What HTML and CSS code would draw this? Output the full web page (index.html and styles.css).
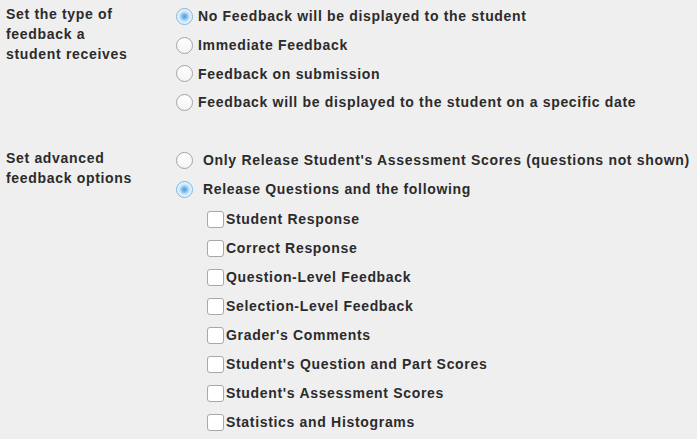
FILE: index.html
```html
<!DOCTYPE html>
<html>
<head>
<meta charset="utf-8">
<link rel="stylesheet" href="styles.css">
</head>
<body>
<div class="form">
  <div class="section">
    <div class="label">Set the type of feedback a student receives</div>
    <div class="options">
      <label class="row"><input type="radio" name="fb" class="radio" checked><span>No Feedback will be displayed to the student</span></label>
      <label class="row"><input type="radio" name="fb" class="radio"><span>Immediate Feedback</span></label>
      <label class="row"><input type="radio" name="fb" class="radio"><span>Feedback on submission</span></label>
      <label class="row"><input type="radio" name="fb" class="radio"><span>Feedback will be displayed to the student on a specific date</span></label>
    </div>
  </div>
  <div class="section second">
    <div class="label">Set advanced feedback options</div>
    <div class="options">
      <label class="row wide"><input type="radio" name="adv" class="radio"><span>Only Release Student's Assessment Scores (questions not shown)</span></label>
      <label class="row wide"><input type="radio" name="adv" class="radio" checked><span>Release Questions and the following</span></label>
      <div class="checks">
        <label class="row"><input type="checkbox" class="check"><span>Student Response</span></label>
        <label class="row"><input type="checkbox" class="check"><span>Correct Response</span></label>
        <label class="row"><input type="checkbox" class="check"><span>Question-Level Feedback</span></label>
        <label class="row"><input type="checkbox" class="check"><span>Selection-Level Feedback</span></label>
        <label class="row"><input type="checkbox" class="check"><span>Grader's Comments</span></label>
        <label class="row"><input type="checkbox" class="check"><span>Student's Question and Part Scores</span></label>
        <label class="row"><input type="checkbox" class="check"><span>Student's Assessment Scores</span></label>
        <label class="row"><input type="checkbox" class="check"><span>Statistics and Histograms</span></label>
      </div>
    </div>
  </div>
</div>
</body>
</html>
```
FILE: styles.css
```css
html, body {
  margin: 0;
  padding: 0;
  background: #efefef;
}
body {
  font-family: "Liberation Sans", Arial, sans-serif;
  font-size: 14px;
  font-weight: bold;
  letter-spacing: 0.68px;
  color: #2b2b2b;
}
.form {
  padding-top: 2px;
  padding-left: 6px;
}
.section {
  display: flex;
  align-items: flex-start;
}
.section.second {
  margin-top: 29px;
}
.label {
  width: 130px;
  flex: 0 0 130px;
  margin-right: 40px;
  line-height: 20px;
  padding-top: 2px;
}
.options {
  display: flex;
  flex-direction: column;
}
.section:first-child .row {
  height: 28.7px;
}
.row {
  display: flex;
  align-items: center;
  height: 29px;
  white-space: nowrap;
}
.radio {
  appearance: none;
  -webkit-appearance: none;
  margin: 0 5px 0 0;
  width: 17px;
  height: 17px;
  border-radius: 50%;
  border: 1px solid #a3a3a3;
  background: linear-gradient(#ffffff, #f4f4f4);
  box-sizing: border-box;
  flex: 0 0 auto;
}
.radio:checked {
  border-color: #7ab8e6;
  background: radial-gradient(circle at 50% 50%, #4aa0e2 0, #6fb4ea 2px, #cfe6f8 5px, #f2f8fd 8px);
}
.wide .radio {
  margin-right: 10px;
}
.checks {
  padding-left: 31px;
  padding-top: 1px;
}
.check {
  appearance: none;
  -webkit-appearance: none;
  margin: 0 2px 0 0;
  width: 17px;
  height: 17px;
  border-radius: 3px;
  border: 1px solid #a8a8a8;
  background: #ffffff;
  box-sizing: border-box;
  flex: 0 0 auto;
}
```
